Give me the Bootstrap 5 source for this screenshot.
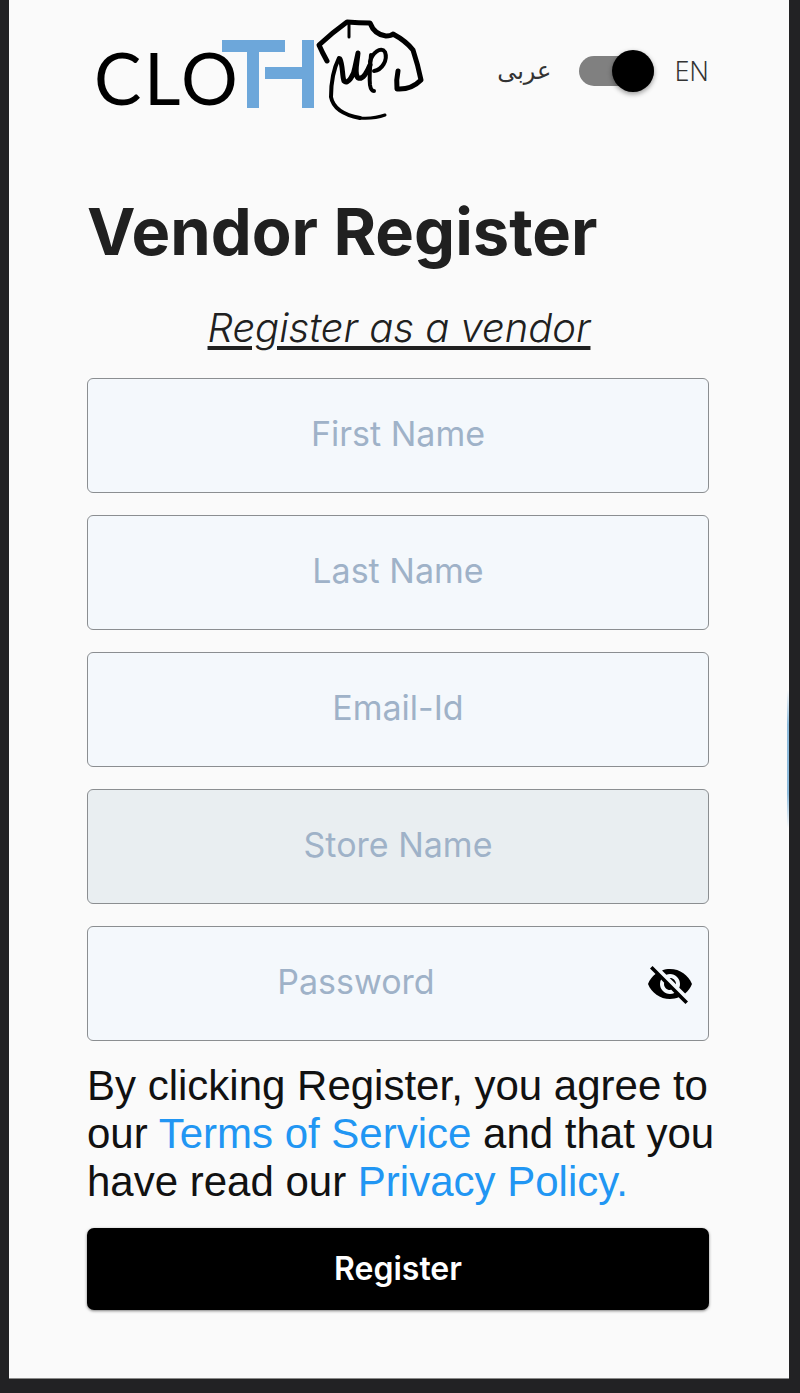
<!DOCTYPE html>
<html lang="en">
<head>
<meta charset="utf-8">
<meta name="viewport" content="width=device-width, initial-scale=1">
<title>Vendor Register</title>
<link href="https://cdn.jsdelivr.net/npm/bootstrap@5.3.0/dist/css/bootstrap.min.css" rel="stylesheet">
<style>
  body { background: #222224; font-family: Inter, "Liberation Sans", sans-serif; color: #202020; }
  .screen { background: #fafafa; margin: 0 11px 14px 9px; padding: 14px 80px 68px 78px; border-bottom: 1px solid #8a8a8a; }
  .edge-tab { top: 690px; right: 0; width: 2px; height: 138px; background: linear-gradient(#fafafa, #8dbbdc 25%, #8dbbdc 75%, #fafafa); }
  .logo { width: 348px; height: 112px; }
  .lang { font-size: 27px; line-height: 32px; color: #333; padding-top: 2px; }
  .lang-en { font-family: "Noto Sans", sans-serif; font-weight: 300; }
  .lang-ar { font-family: "DejaVu Sans", sans-serif; font-size: 24px; }
  .lang-switch { appearance: none; width: 75px; height: 30px; border-radius: 15px; background: #808080; margin: 0; display: flex; align-items: center; justify-content: flex-end; }
  .lang-switch::before { content: ""; width: 42px; height: 42px; flex: none; border-radius: 50%; background: #000; box-shadow: 0 2px 5px rgba(0,0,0,.4); }
  .lang-switch:not(:checked) { justify-content: flex-start; }
  .title { font-size: 65px; line-height: 72px; margin: 70px 0 0; white-space: nowrap; }
  .subtitle { font-size: 40px; line-height: 48px; font-weight: 300; margin: 36px 0 26px; text-decoration-thickness: 2px; text-underline-offset: 4px; padding-left: 2px; }
  .fields { gap: 22px; }
  .field { height: 115px; border: 1px solid #8b8e91; border-radius: 6px; background: #f4f8fc; }
  .field-store { background: #e9eef1; }
  .field input { font-size: 34px; line-height: 48px; padding: 0 0 4px; text-align: center; min-width: 0; color: #202020; }
  .field input::placeholder { color: #9fb2c8; opacity: 1; }
  .eye { padding: 0 14px 0 0; margin-left: 22px; }
  .eye svg { width: 48px; height: 48px; }
  .legal { font-family: "Liberation Sans", sans-serif; font-size: 42px; line-height: 48px; color: #111; margin: 21px -12px 22px 0; }
  .legal a { color: #2196f3; }
  .submit { height: 82px; background: #000; border-radius: 7px; font-size: 32px; font-weight: 600; color: #fff; box-shadow: 0 1px 3px rgba(0,0,0,.5); }
  .submit:hover { background: #222; color: #fff; }
</style>
</head>
<body>
<main class="screen position-relative">
  <div class="edge-tab position-absolute"></div>
  <header class="d-flex align-items-center justify-content-between">
    <svg class="logo" viewBox="87 14 348 112" role="img" aria-label="Cloth Up">
      <text x="94 144 181" y="105" font-family="Lato, sans-serif" font-size="71" fill="#000">CLO</text>
      <path fill="#6da7da" d="M222 40h63v12h-26v56h-12V52h-25zM302 40h12v68h-12V79h-37V67h37z"/>
      <g fill="none" stroke="#000" stroke-linecap="round" stroke-linejoin="round">
        <path stroke-width="5" d="M327 61Q322 52 319 45Q333 32 347 22Q359 23 370 23C373 31 378 35 386 36Q391 36 393 34Q406 41 413 50Q418 65 421 80Q411 90 397 89Q396 80 398 71"/>
        <path stroke-width="3" d="M349 24v13"/>
        <path stroke-width="4" d="M339 58C333 70 331 83 331 97C333 108 344 115 360 118"/>
        <path stroke-width="3" d="M360 118Q374 119 385 115"/>
        <path stroke-width="5" d="M340 59C343 65 342 76 344 81C348 85 354 75 355 67L358 53C357 64 354 74 358 78C363 80 367 72 370 65"/>
        <path stroke-width="4" d="M371 55C370 66 369 77 370 85Q371 91 374 91"/>
        <path stroke-width="4" d="M370 62C372 53 381 46 385 52C388 60 382 70 374 71"/>
      </g>
    </svg>
    <div class="d-flex align-items-center lang">
      <label for="lang" class="lang-ar me-4" lang="ar">عربى</label>
      <input class="lang-switch ms-1" id="lang" type="checkbox" role="switch" checked>
      <label for="lang" class="lang-en ms-3 ps-1">EN</label>
    </div>
  </header>

  <h1 class="title fw-bold">Vendor Register</h1>
  <p class="subtitle text-center fst-italic text-decoration-underline">Register as a vendor</p>

  <form>
    <div class="fields d-flex flex-column">
      <div class="field d-flex">
        <input class="w-100 border-0 bg-transparent" aria-label="First Name" type="text" placeholder="First Name">
      </div>
      <div class="field d-flex">
        <input class="w-100 border-0 bg-transparent" aria-label="Last Name" type="text" placeholder="Last Name">
      </div>
      <div class="field d-flex">
        <input class="w-100 border-0 bg-transparent" aria-label="Email-Id" type="email" placeholder="Email-Id">
      </div>
      <div class="field field-store d-flex">
        <input class="w-100 border-0 bg-transparent" aria-label="Store Name" type="text" placeholder="Store Name">
      </div>
      <div class="field d-flex align-items-center">
        <input class="flex-grow-1 h-100 border-0 bg-transparent" aria-label="Password" type="password" placeholder="Password">
        <button class="eye btn border-0" type="button" aria-label="Show password">
          <svg viewBox="0 0 24 24" fill="#000"><path d="M12 7c2.760 0 5 2.240 5 5 0 .65-.13 1.260-.36 1.830l2.920 2.920c1.510-1.260 2.700-2.890 3.430-4.750-1.730-4.390-6-7.500-11-7.500-1.400 0-2.740.25-3.980.7l2.160 2.160C10.740 7.130 11.350 7 12 7zM2 4.270l2.280 2.280.46.46C3.080 8.300 1.780 10.020 1 12c1.730 4.390 6 7.500 11 7.500 1.550 0 3.030-.3 4.380-.84l.42.42L19.730 22 21 20.730 3.270 3 2 4.270zM7.530 9.800l1.550 1.550c-.05.21-.08.43-.08.65 0 1.660 1.340 3 3 3 .22 0 .44-.03.65-.08l1.550 1.550c-.67.33-1.410.53-2.200.53-2.760 0-5-2.240-5-5 0-.79.2-1.530.53-2.200zm4.310-.78l3.150 3.150.02-.16c0-1.660-1.340-3-3-3l-.17.01z"/></svg>
        </button>
      </div>
    </div>
    <p class="legal">By clicking Register, you agree to our <a class="text-decoration-none" href="#terms">Terms of Service</a> and that you have read our <a class="text-decoration-none" href="#privacy">Privacy Policy.</a></p>
    <button class="submit btn w-100 border-0" type="submit">Register</button>
  </form>
</main>
<script src="https://cdn.jsdelivr.net/npm/bootstrap@5.3.0/dist/js/bootstrap.bundle.min.js"></script>
</body>
</html>
